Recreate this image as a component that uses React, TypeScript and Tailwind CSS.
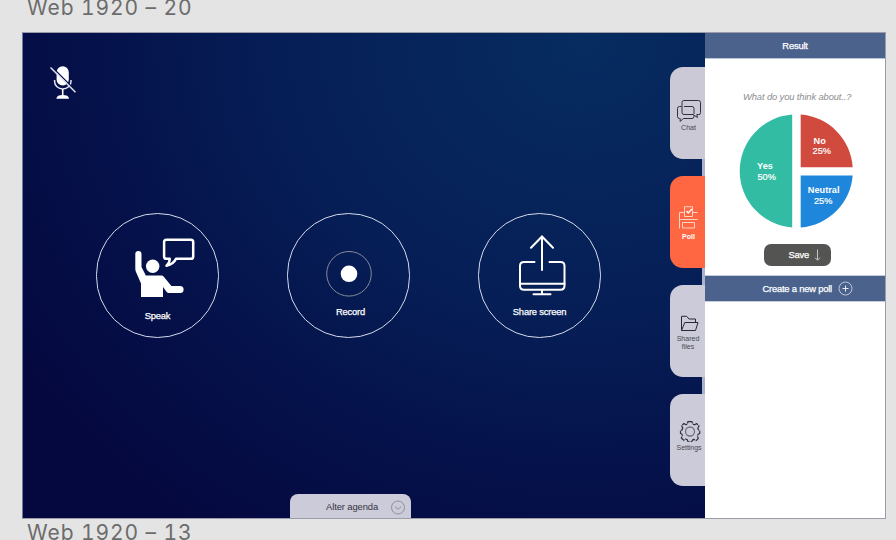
import React from "react";

const label = "whitespace-nowrap text-[9.4px] leading-[12px] tracking-[-0.2px] text-white [-webkit-text-stroke:0.25px_white]";

function MutedMic() {
  return (
    <svg className="ml-[26px] mt-8 h-9 w-7 shrink-0" viewBox="49 65 28 36" fill="none">
      <rect x="56.6" y="66.3" width="12.2" height="19.2" rx="6.1" fill="#fff" />
      <path d="M54.600 80v1.500a8.200 7.500 0 0 0 16.400 0V80" stroke="#e4e7f2" strokeWidth="1.500" />
      <path d="M62.700 89v6" stroke="#fff" strokeWidth="1.600" />
      <path d="M56.300 98.800c.5-2.800 2.500-3.700 6.400-3.700s5.900.9 6.400 3.700z" fill="#fff" />
      <path d="M51.500 66.500l25 25" stroke="#07134a" strokeWidth="1.300" />
      <path d="M50.500 67.500l25 24.700" stroke="#dfe3ef" strokeWidth="1.500" />
    </svg>
  );
}

function SpeakIcon() {
  return (
    <svg className="h-16 w-[76px]" viewBox="120 236 76 64" fill="none">
      <circle cx="152.700" cy="266.200" r="6.700" fill="#fff" />
      <path
        d="M135.300 254.200a3.100 3.100 0 0 1 6.200 0V267l4.300 8.600h15.500q1.500 0 2.500 1.200l7.600 9.300h8.700a3.500 3.500 0 0 1 0 7h-11.400q-1.200 0-2-1l-3.700-5V297H141v-13.500l-5-11.500q-.7-1.500-.7-3z"
        fill="#fff"
      />
      <path
        d="M166.500 239.700h24.300q2.400 0 2.400 2.400v14.300q0 2.400-2.400 2.400H176q-2.500 5.500-9.500 7 3.200-2.500 3.200-7h-3.200q-2.400 0-2.400-2.400v-14.300q0-2.400 2.400-2.400z"
        stroke="#fff"
        strokeWidth="2.500"
        strokeLinejoin="round"
      />
    </svg>
  );
}

function RecordIcon() {
  return (
    <svg className="h-12 w-12" viewBox="324.500 250 48 48" fill="none">
      <circle cx="348.500" cy="273.800" r="22.300" stroke="#858c97" strokeWidth="1" />
      <circle cx="348.500" cy="273.800" r="8.300" fill="#fff" />
    </svg>
  );
}

function ShareIcon() {
  return (
    <svg className="ml-[5px] h-[62px] w-[50px]" viewBox="517 234 50 62" fill="none" stroke="#fff" strokeWidth="2" strokeLinecap="round">
      <path d="M542 270v-33M531 247.700l11-11.200 11 11.200" />
      <path d="M534.500 262H524q-4 0-4 4v19.700q0 4 4 4h36.500q4 0 4-4V266q0-4-4-4h-11" />
      <path d="M520 283.800h44.500M542 290v4M533.500 294.300h17" />
    </svg>
  );
}

function ActionButton({ icon, children, offset, className }: { icon: React.ReactNode; children: string; offset: string; className: string }) {
  return (
    <button className={"flex h-[125px] w-[123px] shrink-0 flex-col items-center rounded-full border border-[#d5dbea] " + className}>
      {icon}
      <span className={label + " " + offset}>{children}</span>
    </button>
  );
}

function ChatIcon() {
  return (
    <svg className="ml-[2px] mt-8 h-6 w-[26px]" viewBox="676 98 26 24" fill="none" stroke="#30303a" strokeWidth="1">
      <path d="M684 99.500h14.500q2 0 2 2v10q0 2-1.500 2.200M684 99.500q-2 0-2 2v10q0 2 2 2h9l4.500 3-.7-3h2" />
      <path d="M681.500 105.500h-2q-2 0-2 2v8q0 2 2 2h.7v3l3-3h8.800q2 0 2-2v-1.500M684 105.500h8q2 0 2 2v5.500" />
    </svg>
  );
}

function PollIcon() {
  return (
    <svg className="ml-[2px] mt-[29px] h-6 w-[22px]" viewBox="678 205 22 24" fill="none" stroke="#ffd3c5" strokeWidth="1">
      <path d="M684.500 216.500v-9.800h8v9.800zM684 212.500h-4.500v16M693 212.500h4.500M679.500 219.500h18M682.500 222.500h12v5.500h-12z" />
      <path d="M686.500 211l1.800 2 3.500-4" stroke="#fff" strokeWidth="1.400" />
    </svg>
  );
}

function FolderIcon() {
  return (
    <svg className="ml-[4px] mt-7 h-5 w-5" viewBox="680 313 20 20" fill="none" stroke="#292b32" strokeWidth="1" strokeLinejoin="round">
      <path d="M681.500 330.500v-14.200h5.200l2.300 2.700h6.500v3.500M681.500 330.500l3.300-8H698l-2.500 8z" />
    </svg>
  );
}

function GearIcon() {
  return (
    <svg className="ml-[4px] mt-[26px] h-[22px] w-[22px]" viewBox="0 0 22 22" fill="none">
      <path
        d="M8.800 1.700h4.200l.6 2.300 1.900.8 2.300-1.200 2.200 2.400-1.200 2.200.7 1.800 1.200.5v3l-1.600.8-.8 1.900 1.100 2.200-2.300 2.200-2.200-1.200-1.500.7-.6 1.700H9l-.7-2-1.600-.7-2.200 1.100-2.200-2.200 1.200-2.400-.7-1.600-1.300-.5v-3l1.500-.6.8-1.800-1.200-2.300 2.300-2.300 2.100 1.200 1.600-.8z"
        stroke="#30323b"
        strokeWidth="1.200"
        strokeDasharray="6 .8"
        strokeLinejoin="round"
      />
      <circle cx="11" cy="11.500" r="4.500" stroke="#70727c" strokeWidth="1.300" />
    </svg>
  );
}

function SideTab({ icon, children, className }: { icon: React.ReactNode; children: React.ReactNode; className: string }) {
  return (
    <button className={"flex h-[92px] w-[35px] shrink-0 flex-col items-center rounded-l-[13px] text-center text-[7px] leading-[8px] " + className}>
      {icon}
      {children}
    </button>
  );
}

function TabGap() {
  return <div className="h-[17px] w-[3px] shrink-0 self-end bg-[#aab2cd]" />;
}

function PieChart() {
  return (
    <svg
      className="ml-[34px] mt-[10px] h-[116px] w-[116px] shrink-0"
      viewBox="739 113 116 116"
      fontSize="9.200"
      textAnchor="middle"
    >
      <path d="M792.200 114.500a56.600 56.600 0 0 0 0 112.900z" fill="#32bca3" />
      <path d="M800.700 114.500a56.500 56.500 0 0 1 52 52.700h-52z" fill="#d04a3d" />
      <path d="M800.700 175.400h52a56.500 56.500 0 0 1-52 52z" fill="#1e87dc" />
      <g fill="#fff">
        <g fontWeight="700">
          <text x="765" y="169">Yes</text>
          <text x="819.700" y="143.800">No</text>
          <text x="823.700" y="193">Neutral</text>
        </g>
        <g stroke="#fff" strokeWidth=".2">
          <text x="766.700" y="180">50%</text>
          <text x="821.800" y="154.300">25%</text>
          <text x="823.200" y="204">25%</text>
        </g>
      </g>
    </svg>
  );
}

export default function App() {
  const artboardTitle = "ml-[27px] whitespace-nowrap font-['Inter',sans-serif] text-[21px] leading-6 tracking-[0.9px] tabular-nums text-[#6c6c6c]";
  return (
    <div className="flex h-[540px] w-[896px] flex-col overflow-hidden bg-[#e4e4e4] font-['Liberation_Sans',Arial,sans-serif]">
      <div className="h-8 shrink-0">
        <div className={artboardTitle + " -mt-1"}>Web 1920 – 20</div>
      </div>
      <main className="ml-[22px] flex h-[487px] w-[864px] shrink-0 border border-[#9c9da8] border-l-[#6580a4] bg-[radial-gradient(ellipse_680px_600px_at_560px_10px,#062c60_0%,#061e56_45%,#050f48_77%,#05083f_100%)]">
        <section className="flex w-[647px] shrink-0 flex-col">
          <MutedMic />
          <div className="ml-[73px] mt-[112px] flex shrink-0 gap-[68px]">
            <ActionButton icon={<SpeakIcon />} offset="mt-[10px]" className="pt-[22px]">Speak</ActionButton>
            <ActionButton icon={<RecordIcon />} offset="ml-1 mt-2" className="pt-9">Record</ActionButton>
            <ActionButton icon={<ShareIcon />} offset="mt-[10px]" className="pt-5">Share screen</ActionButton>
          </div>
          <button className="ml-[267px] mt-auto flex h-6 w-[121px] shrink-0 items-center justify-end gap-3 rounded-t-[8px] bg-[#cbcbda] pr-[5px] text-[#33333c]">
            <span className="whitespace-nowrap pt-0.5 text-[9.400px] leading-3 tracking-[-0.1px]">Alter agenda</span>
            <svg className="mt-1 h-4 w-4" viewBox="0 0 16 16" fill="none" stroke="#8e8f9e">
              <circle cx="8" cy="7.500" r="6.500" />
              <path d="M5 6.700l3 2.600 3-2.600" />
            </svg>
          </button>
        </section>
        <nav className="flex w-[35px] shrink-0 flex-col pt-[34px]">
          <SideTab icon={<ChatIcon />} className="bg-[#cbc9d5] text-[#484852]">
            <span className="mt-[1px] pl-0.5">Chat</span>
          </SideTab>
          <TabGap />
          <SideTab icon={<PollIcon />} className="bg-[#ff6743] font-bold text-white">
            <span className="mt-[4px] pl-0.5">Poll</span>
          </SideTab>
          <TabGap />
          <SideTab icon={<FolderIcon />} className="bg-[#cbcbd9] text-[#484852]">
            <span className="mt-[2px] pl-px">Shared<br />files</span>
          </SideTab>
          <TabGap />
          <SideTab icon={<GearIcon />} className="bg-[#cbcbd9] text-[#484852]">
            <span className="mt-[2px] pl-[3px] tracking-[-0.05px]">Settings</span>
          </SideTab>
        </nav>
        <aside className="flex w-[180px] shrink-0 flex-col bg-white">
          <header className="flex h-[26px] shrink-0 items-center justify-center border-b border-[#bcc5d5] bg-[#4a628c]">
            <span className={label}>Result</span>
          </header>
          <p className="ml-[38px] mt-8 whitespace-nowrap text-[9.400px] italic leading-3 tracking-[-0.12px] text-[#8d8d8d]">What do you think about..?</p>
          <PieChart />
          <button className="ml-[59px] mt-[15px] flex h-[22px] w-[67px] shrink-0 items-center justify-end gap-1 rounded-[7px] bg-[#545553] pr-2">
            <span className={label}>Save</span>
            <svg className="h-3 w-[10px]" viewBox="0 0 10 12" fill="none" stroke="#c6c6c6">
              <path d="M4.500 .5v10.500M2 8.700l2.500 2.500L7 8.700" />
            </svg>
          </button>
          <button className="mt-[9px] flex h-[27px] shrink-0 items-center justify-end gap-1.5 border-y border-[#c5ccda] bg-[#4a628c] pr-8">
            <span className={label}>Create a new poll</span>
            <svg className="h-[15px] w-[15px]" viewBox="0 0 15 15" fill="none" stroke="#c9d1de">
              <circle cx="7.500" cy="7.500" r="6.500" strokeWidth=".9" />
              <path d="M4.500 7.500h6M7.500 4.500v6" stroke="#e6eaf1" />
            </svg>
          </button>
        </aside>
      </main>
      <div className={artboardTitle + " mt-[2px]"}>Web 1920 – 13</div>
    </div>
  );
}
